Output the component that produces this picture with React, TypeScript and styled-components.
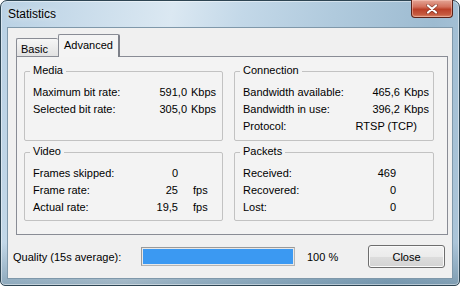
import React, { FC } from "react";
import styled, { createGlobalStyle } from "styled-components";

const GlobalStyle = createGlobalStyle`
  html, body {
    margin: 0;
    padding: 0;
    background: #ffffff;
  }
  body {
    font-family: "Liberation Sans", Arial, sans-serif;
    font-size: 11px;
    color: #000;
  }
`;

//  window chrome
const Window = styled.div`
  box-sizing: border-box;
  width: 460px;
  height: 286px;
  display: flex;
  flex-direction: column;
  padding: 0 6px 6px 6px;
  border: 1px solid #2e4553;
  border-radius: 7px 7px 5px 5px;
  background:
    linear-gradient(180deg, rgba(255, 255, 255, 0) 85%, rgba(40, 80, 105, 0.35) 100%),
    linear-gradient(100deg, #b9d1e4 0%, #cfe0ed 22%, #dbe8f2 34%, #c3d8e8 48%, #b0cadd 66%, #9dbbd1 86%, #aec7da 100%);
  box-shadow: inset 0 0 0 1px rgba(255, 255, 255, 0.45);
`;

const TitleBar = styled.div`
  height: 26px;
  display: flex;
  align-items: center;
  padding-left: 1px;
`;

const Title = styled.span`
  font-size: 12px;
  color: #000;
  text-shadow: 0 0 6px rgba(255, 255, 255, 0.9);
`;

const CloseBox = styled.div`
  margin-left: auto;
  align-self: flex-start;
  margin-top: -1px;
  width: 42px;
  height: 18px;
  box-sizing: border-box;
  border: 1px solid #5b2218;
  border-top: none;
  border-radius: 0 0 4px 4px;
  background: linear-gradient(180deg, #e4a596 0%, #d3705c 40%, #bb4028 55%, #c65a3f 85%, #d98a6c 100%);
  box-shadow: inset 0 0 0 1px rgba(255, 210, 200, 0.45);
  display: flex;
  align-items: center;
  justify-content: center;
`;

const Client = styled.div`
  flex: 1;
  display: flex;
  flex-direction: column;
  background: #f0f0f0;
  border: 1px solid #7f98aa;
`;

//  tabs
const TabStrip = styled.div`
  height: 28px;
  display: flex;
  align-items: flex-end;
  padding-left: 8px;
`;

const Tab = styled.div<{ $active?: boolean }>`
  box-sizing: border-box;
  height: ${(p) => (p.$active ? 23 : 18)}px;
  margin-bottom: ${(p) => (p.$active ? -1 : 0)}px;
  padding: ${(p) => (p.$active ? "3px 0 0 5px" : "3px 0 0 4px")};
  width: ${(p) => (p.$active ? 62 : 42)}px;
  border: 1px solid #898c95;
  border-bottom: none;
  border-left: ${(p) => (p.$active ? "1px solid #898c95" : "1px solid #898c95")};
  border-right: ${(p) => (p.$active ? "2px solid #7d8089" : "none")};
  border-radius: 2px 2px 0 0;
  background: ${(p) =>
    p.$active ? "#f4f4f4" : "linear-gradient(180deg, #f6f6f6 0%, #ececec 50%, #e2e2e2 100%)"};
  position: relative;
  z-index: ${(p) => (p.$active ? 1 : 0)};
  line-height: 14px;
`;

const TabPanel = styled.div`
  box-sizing: border-box;
  height: 179px;
  margin: 0 4px 0 8px;
  border: 1px solid #898c95;
  background: #f3f3f3;
  display: grid;
  grid-template-columns: 199px 200px;
  grid-template-rows: 70px 69px;
  gap: 11px;
  padding: 14px 13px 13px 7px;
`;

const Group = styled.div`
  box-sizing: border-box;
  position: relative;
  border: 1px solid #c2c2c2;
  border-radius: 2px;
  padding: 11px 0 0 8px;
`;

const Legend = styled.span`
  position: absolute;
  top: -8px;
  left: 5px;
  padding: 0 3px;
  line-height: 13px;
  background: #f3f3f3;
`;

const Rows = styled.div<{ $cols: string; $gap: number; $pr: number }>`
  display: grid;
  grid-template-columns: ${(p) => p.$cols};
  column-gap: ${(p) => p.$gap}px;
  grid-auto-rows: 17px;
  align-items: center;
  padding-right: ${(p) => p.$pr}px;
  white-space: nowrap;
`;

const Value = styled.span<{ $span?: boolean; $pad?: number }>`
  text-align: right;
  grid-column: ${(p) => (p.$span ? "2 / 4" : "auto")};
  padding-right: ${(p) => p.$pad || 0}px;
`;

//  bottom bar
const BottomBar = styled.div`
  flex: 1;
  display: flex;
  align-items: center;
  padding: 0 7px 0 5px;
`;

const QualityLabel = styled.span`
  width: 128px;
`;

const Progress = styled.div`
  box-sizing: border-box;
  width: 154px;
  height: 19px;
  padding: 1px;
  border: 1px solid #b4b4b4;
  border-top-color: #9a9a9a;
  border-left-color: #9a9a9a;
  background: #e8e8e8;
`;

const Fill = styled.div`
  height: 100%;
  background: #3b99f2;
`;

const Percent = styled.span`
  width: 61px;
  margin-left: 12px;
`;

const Button = styled.button`
  box-sizing: border-box;
  width: 77px;
  height: 23px;
  font-family: "Liberation Sans", Arial, sans-serif;
  font-size: 11px;
  color: #000;
  border: 1px solid #6e6e6e;
  border-radius: 3px;
  background: linear-gradient(180deg, #f2f2f2 0%, #ebebeb 50%, #dddddd 51%, #d3d3d3 100%);
  box-shadow: inset 0 0 0 1px #fafafa;
  padding: 0;
`;

interface Stat {
  label: string;
  value: string;
  unit?: string;
  wide?: boolean;
}

interface Layout {
  cols: string;
  gap: number;
  pr: number;
}

const StatGroup: FC<{ title: string; stats: Stat[]; layout: Layout }> = ({ title, stats, layout }) => (
  <Group>
    <Legend>{title}</Legend>
    <Rows $cols={layout.cols} $gap={layout.gap} $pr={layout.pr}>
      {stats.map((s) => (
        <React.Fragment key={s.label}>
          <span>{s.label}</span>
          {s.wide ? (
            <Value $span $pad={17}>{s.value}</Value>
          ) : (
            <>
              <Value>{s.value}</Value>
              {s.unit !== undefined && <span>{s.unit}</span>}
            </>
          )}
        </React.Fragment>
      ))}
    </Rows>
  </Group>
);

const media: Stat[] = [
  { label: "Maximum bit rate:", value: "591,0", unit: "Kbps" },
  { label: "Selected bit rate:", value: "305,0", unit: "Kbps" },
];

const connection: Stat[] = [
  { label: "Bandwidth available:", value: "465,6", unit: "Kbps" },
  { label: "Bandwidth in use:", value: "396,2", unit: "Kbps" },
  { label: "Protocol:", value: "RTSP (TCP)", wide: true },
];

const video: Stat[] = [
  { label: "Frames skipped:", value: "0", unit: "" },
  { label: "Frame rate:", value: "25", unit: "fps" },
  { label: "Actual rate:", value: "19,5", unit: "fps" },
];

const packets: Stat[] = [
  { label: "Received:", value: "469" },
  { label: "Recovered:", value: "0" },
  { label: "Lost:", value: "0" },
];

const App: FC = () => {
  const quality = 100;

  return (
    <>
      <GlobalStyle />
      <Window>
        <TitleBar>
          <Title>Statistics</Title>
          <CloseBox>
            <svg width="12" height="10" viewBox="0 0 12 10">
              <path
                d="M2 1.5 L10 8.5 M10 1.5 L2 8.5"
                stroke="#4a1810"
                strokeWidth="3.6"
                strokeLinecap="round"
                opacity="0.5"
              />
              <path d="M2 1.5 L10 8.5 M10 1.5 L2 8.5" stroke="#ffffff" strokeWidth="2.2" strokeLinecap="round" />
            </svg>
          </CloseBox>
        </TitleBar>
        <Client>
          <TabStrip>
            <Tab>Basic</Tab>
            <Tab $active>Advanced</Tab>
          </TabStrip>
          <TabPanel>
            <StatGroup title="Media" stats={media} layout={{ cols: "1fr 52px 29px", gap: 4, pr: 2 }} />
            <StatGroup title="Connection" stats={connection} layout={{ cols: "1fr 52px 30px", gap: 4, pr: 1 }} />
            <StatGroup title="Video" stats={video} layout={{ cols: "1fr 40px 28px", gap: 15, pr: 1 }} />
            <StatGroup title="Packets" stats={packets} layout={{ cols: "1fr 50px", gap: 0, pr: 37 }} />
          </TabPanel>
          <BottomBar>
            <QualityLabel>Quality (15s average):</QualityLabel>
            <Progress>
              <Fill style={{ width: `${quality}%` }} />
            </Progress>
            <Percent>{quality} %</Percent>
            <Button>Close</Button>
          </BottomBar>
        </Client>
      </Window>
    </>
  );
};

export default App;
